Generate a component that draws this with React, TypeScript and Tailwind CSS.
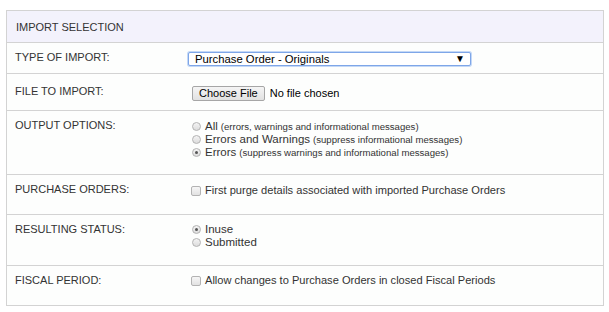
import React from 'react';

const font = { fontFamily: '"Liberation Sans", Arial, sans-serif' };

const Radio: React.FC<{ checked?: boolean }> = ({ checked }) => (
    <span className="mr-[4px] inline-flex h-[9px] w-[9px] shrink-0 items-center justify-center rounded-full border border-[#b3b3b3] bg-gradient-to-b from-[#f4f4f4] to-[#dcdcdc]">
        {checked && <span className="h-[3px] w-[3px] rounded-full bg-[#555]" />}
    </span>
);

const Checkbox: React.FC = () => (
    <span className="mr-[4px] inline-block h-[10px] w-[10px] shrink-0 rounded-[2px] border border-[#b3b3b3] bg-gradient-to-b from-[#f6f6f6] to-[#e2e2e2]" />
);

const Row: React.FC<{ label: string; h: string; pt?: string; children: React.ReactNode }> = ({ label, h, pt = 'pt-[8px]', children }) => (
    <div className={`flex border-b border-[#d3d3d3] ${h}`}>
        <div className={`w-[181px] shrink-0 pl-[8px] text-[11px] leading-[13px] text-[#333] ${pt}`}>{label}</div>
        <div className="flex-1">{children}</div>
    </div>
);

const Option: React.FC<{ checked?: boolean; main: string; note?: string }> = ({ checked, main, note }) => (
    <div className="flex h-[13px] items-center pl-[4px] text-[#333]">
        <Radio checked={checked} />
        <span className="text-[11.5px] leading-[13px]">{main}</span>
        {note && <span className="ml-[3px] text-[9.6px] leading-[13px]">{note}</span>}
    </div>
);

export default function App() {
    return (
        <div className="min-h-[312px] bg-white pl-[6px] pt-[10px]" style={font}>
            <div className="w-[598px] border border-b-0 border-[#d3d3d3] bg-[#fdfefd]">
                <div className="flex h-[32px] items-center border-b border-[#d3d3d3] bg-[#f3f2fc] pl-[9px] pt-[1px] text-[11px] text-[#333]">
                    IMPORT SELECTION
                </div>

                <Row label="TYPE OF IMPORT:" h="h-[31px]">
                    <div className="mt-[9px] flex h-[14px] w-[283px] items-center justify-between rounded-[2px] border border-[#7ea6e8] bg-white pl-[6px] pr-[5px] text-[11.3px] text-black shadow-[0_0_0_1px_#c4d8f6]">
                        <span>Purchase Order - Originals</span>
                        <span className="text-[10px] leading-none">▼</span>
                    </div>
                </Row>

                <Row label="FILE TO IMPORT:" h="h-[37px]" pt="pt-[11px]">
                    <div className="mt-[11px] flex items-center pl-[4px] text-[11px] text-[#333]">
                        <span className="flex h-[15px] items-center rounded-[2px] border border-[#a6a6a6] bg-gradient-to-b from-[#f5f5f5] to-[#e1e1e1] px-[6px] text-black">
                            Choose File
                        </span>
                        <span className="ml-[5px] text-black">No file chosen</span>
                    </div>
                </Row>

                <Row label="OUTPUT OPTIONS:" h="h-[64px]">
                    <div className="pt-[9px]">
                        <Option main="All" note="(errors, warnings and informational messages)" />
                        <Option main="Errors and Warnings" note="(suppress informational messages)" />
                        <Option checked main="Errors" note="(suppress warnings and informational messages)" />
                    </div>
                </Row>

                <Row label="PURCHASE ORDERS:" h="h-[40px]">
                    <div className="mt-[9px] flex h-[13px] items-center pl-[3px] text-[11.1px] text-[#333]">
                        <Checkbox />
                        <span>First purge details associated with imported Purchase Orders</span>
                    </div>
                </Row>

                <Row label="RESULTING STATUS:" h="h-[51px]">
                    <div className="pt-[8px]">
                        <Option checked main="Inuse" />
                        <Option main="Submitted" />
                    </div>
                </Row>

                <Row label="FISCAL PERIOD:" h="h-[40px]">
                    <div className="mt-[8px] flex h-[13px] items-center pl-[3px] text-[11.1px] text-[#333]">
                        <Checkbox />
                        <span>Allow changes to Purchase Orders in closed Fiscal Periods</span>
                    </div>
                </Row>
            </div>
        </div>
    );
}
